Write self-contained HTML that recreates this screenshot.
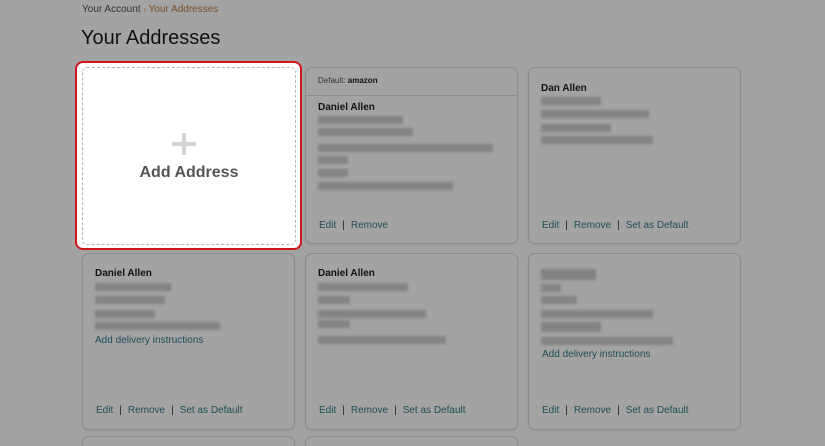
<!DOCTYPE html>
<html style="width:825px;height:446px;overflow:hidden"><head><meta charset="utf-8"><style>
*{margin:0;padding:0;box-sizing:border-box}
body{width:825px;height:446px;overflow:hidden;background:#a3a3a3;font-family:"Liberation Sans",Arial,sans-serif;position:relative;color:#111}
.a{position:absolute}
.card{position:absolute;width:213px;height:177px;border:1px solid #8c8c8c;border-radius:7px;background:#a3a3a3;box-shadow:0 1px 2px rgba(0,0,0,.08)}
.nm{position:absolute;font-size:10px;font-weight:bold;color:#111}
.bl{position:absolute;height:8px;background:#7e7e7e;filter:blur(1.3px);opacity:.85}
.lk{position:absolute;font-size:10px;color:#1e4e56;white-space:nowrap}
.lk b{font-weight:normal;color:#222;margin:0 6px}
</style></head><body>
<div class="a" style="left:82px;top:4px;font-size:10px;color:#333">Your Account <span style="font-size:8px;color:#8a5a2a">›</span> <span style="color:#7a4e22">Your Addresses</span></div>
<div class="a" style="left:81px;top:27px;font-size:20px;color:#111">Your Addresses</div>

<div class="a" style="left:75px;top:61px;width:227px;height:189px;border:2px solid #d0161c;border-radius:8px;background:#fff"></div>
<div class="a" style="left:82px;top:67px;width:214px;height:178px;border:1px dashed #b5b5b5;border-radius:5px"></div>
<div class="a" style="left:182px;top:133px;width:4px;height:22px;background:#d4d4d4"></div>
<div class="a" style="left:172px;top:142px;width:24px;height:4px;background:#d4d4d4"></div>
<div class="a" style="left:82px;top:164px;width:214px;text-align:center;font-size:16px;font-weight:bold;color:#555">Add Address</div>

<div class="card" style="left:305px;top:67px">
 <div class="a" style="left:0;top:0;width:211px;height:28px;border-bottom:1px solid #8c8c8c"></div>
 <div class="a" style="left:12px;top:8px;font-size:8px;color:#333">Default: <b style="color:#111">amazon</b></div>
 <div class="nm" style="left:12px;top:34px">Daniel Allen</div>
 <div class="bl" style="left:12px;top:48px;width:85px"></div>
 <div class="bl" style="left:12px;top:60px;width:95px"></div>
 <div class="bl" style="left:12px;top:76px;width:175px"></div>
 <div class="bl" style="left:12px;top:88px;width:30px"></div>
 <div class="bl" style="left:12px;top:101px;width:30px"></div>
 <div class="bl" style="left:12px;top:114px;width:135px"></div>
 <div class="lk" style="left:13px;top:152px">Edit<b>|</b>Remove</div>
</div>

<div class="card" style="left:528px;top:67px">
 <div class="nm" style="left:12px;top:15px">Dan Allen</div>
 <div class="bl" style="left:12px;top:29px;width:60px"></div>
 <div class="bl" style="left:12px;top:42px;width:108px"></div>
 <div class="bl" style="left:12px;top:56px;width:70px"></div>
 <div class="bl" style="left:12px;top:68px;width:112px"></div>
 <div class="lk" style="left:13px;top:152px">Edit<b>|</b>Remove<b>|</b>Set as Default</div>
</div>

<div class="card" style="left:82px;top:253px">
 <div class="nm" style="left:12px;top:14px">Daniel Allen</div>
 <div class="bl" style="left:12px;top:29px;width:76px"></div>
 <div class="bl" style="left:12px;top:42px;width:70px"></div>
 <div class="bl" style="left:12px;top:56px;width:60px"></div>
 <div class="bl" style="left:12px;top:68px;width:125px"></div>
 <div class="lk" style="left:12px;top:81px">Add delivery instructions</div>
 <div class="lk" style="left:13px;top:151px">Edit<b>|</b>Remove<b>|</b>Set as Default</div>
</div>

<div class="card" style="left:305px;top:253px">
 <div class="nm" style="left:12px;top:14px">Daniel Allen</div>
 <div class="bl" style="left:12px;top:29px;width:90px"></div>
 <div class="bl" style="left:12px;top:42px;width:32px"></div>
 <div class="bl" style="left:12px;top:56px;width:108px"></div>
 <div class="bl" style="left:12px;top:66px;width:32px"></div>
 <div class="bl" style="left:12px;top:82px;width:128px"></div>
 <div class="lk" style="left:13px;top:151px">Edit<b>|</b>Remove<b>|</b>Set as Default</div>
</div>

<div class="card" style="left:528px;top:253px">
 <div class="bl" style="left:12px;top:15px;width:55px;height:11px"></div>
 <div class="bl" style="left:12px;top:30px;width:20px"></div>
 <div class="bl" style="left:12px;top:42px;width:36px"></div>
 <div class="bl" style="left:12px;top:56px;width:112px"></div>
 <div class="bl" style="left:12px;top:68px;width:60px;height:10px"></div>
 <div class="bl" style="left:12px;top:83px;width:132px"></div>
 <div class="lk" style="left:13px;top:95px">Add delivery instructions</div>
 <div class="lk" style="left:13px;top:151px">Edit<b>|</b>Remove<b>|</b>Set as Default</div>
</div>

<div class="card" style="left:82px;top:436px;height:10px;border-bottom:none;border-radius:7px 7px 0 0"></div>
<div class="card" style="left:305px;top:436px;height:10px;border-bottom:none;border-radius:7px 7px 0 0"></div>
</body></html>
